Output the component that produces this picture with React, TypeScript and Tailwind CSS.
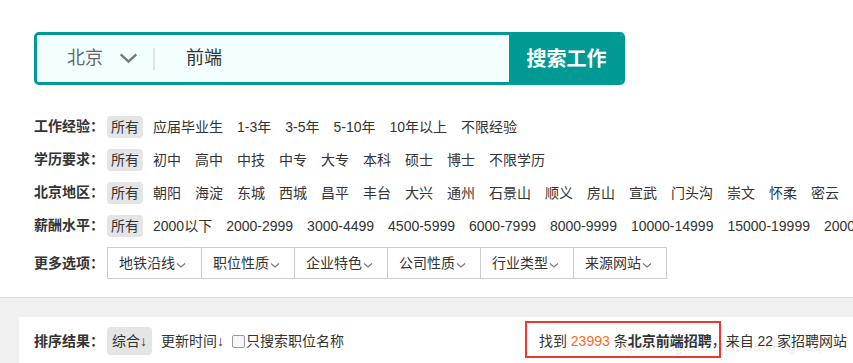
import React from 'react';

const FONT = { fontFamily: '"Liberation Sans", "Noto Sans CJK SC", sans-serif' };

interface FilterRow {
  label: string;
  items: string[];
}

const filterRows: FilterRow[] = [
  { label: '工作经验：', items: ['应届毕业生', '1-3年', '3-5年', '5-10年', '10年以上', '不限经验'] },
  { label: '学历要求：', items: ['初中', '高中', '中技', '中专', '大专', '本科', '硕士', '博士', '不限学历'] },
  {
    label: '北京地区：',
    items: ['朝阳', '海淀', '东城', '西城', '昌平', '丰台', '大兴', '通州', '石景山', '顺义', '房山', '宣武', '门头沟', '崇文', '怀柔', '密云', '延庆'],
  },
  {
    label: '薪酬水平：',
    items: ['2000以下', '2000-2999', '3000-4499', '4500-5999', '6000-7999', '8000-9999', '10000-14999', '15000-19999', '20000以上'],
  },
];

const moreOptions = ['地铁沿线', '职位性质', '企业特色', '公司性质', '行业类型', '来源网站'];

const SmallChevron: React.FC = () => (
  <svg viewBox="0 0 12 12" className="w-[12px] h-[12px] mt-[3px]" fill="none" stroke="#777" strokeWidth={1.1}>
    <path d="M2 4.5l4 3.5 4-3.5" />
  </svg>
);

const Chip: React.FC<{ children: React.ReactNode; active?: boolean }> = ({ children, active }) => (
  <span className={`px-[4px] h-[22px] leading-[22px] rounded-[4px] ${active ? 'bg-[#e5e5e5]' : ''}`}>{children}</span>
);

const Row: React.FC<{ row: FilterRow }> = ({ row }) => (
  <div className="flex items-center h-[33px] whitespace-nowrap text-[14px] text-[#333]">
    <span className="font-bold w-[73px] shrink-0">{row.label}</span>
    <div className="flex items-center gap-[6px]">
      <Chip active>所有</Chip>
      {row.items.map((item) => (
        <Chip key={item}>{item}</Chip>
      ))}
    </div>
  </div>
);

export default function App() {
  return (
    <div className="w-full h-[363px] overflow-hidden bg-white" style={FONT}>
      <div className="w-[1100px]">
        {/* search area */}
        <div className="pt-[32px] pl-[34px]">
          <div className="flex w-[591px] h-[53px] border-[3px] border-[#009a95] rounded-[5px] overflow-hidden">
            <div className="flex-1 flex items-center bg-[#f3fffe]">
              <span className="ml-[30px] text-[18px] text-[#666]">北京</span>
              <svg viewBox="0 0 20 12" className="ml-[16px] w-[19px] h-[11px]" fill="none" stroke="#777" strokeWidth={2.6}>
                <path d="M1.5 1.5l8.5 8 8.5-8" />
              </svg>
              <span className="ml-[15px] w-[2px] h-[22px] bg-[#e2e2e2]" />
              <span className="ml-[31px] text-[18px] text-[#333]">前端</span>
            </div>
            <button className="w-[113px] pl-[2px] bg-[#009a95] text-white text-[20px] font-bold">搜索工作</button>
          </div>
        </div>

        {/* filters */}
        <div className="pl-[34px] pt-[25px]">
          {filterRows.map((row) => (
            <Row key={row.label} row={row} />
          ))}
          <div className="flex items-center mt-[5px] whitespace-nowrap text-[14px] text-[#333]">
            <span className="font-bold w-[73px] shrink-0">更多选项：</span>
            <div className="flex border border-[#ccc] h-[32px]">
              {moreOptions.map((opt, i) => (
                <div
                  key={opt}
                  className={`flex items-center w-[93px] pl-[11px] ${i > 0 ? 'border-l border-[#ccc]' : ''}`}
                >
                  {opt}
                  <SmallChevron />
                </div>
              ))}
            </div>
          </div>
        </div>

        {/* results bar */}
        <div className="mt-[18px] border-t border-[#dcdcdc] bg-[#f0f0f0] pt-[19px] pl-[19px]">
          <div className="bg-white h-[60px] pl-[15px] pt-[10px]">
            <div className="flex items-center justify-between w-[813px] whitespace-nowrap text-[14px] text-[#333]">
              <div className="flex items-center">
                <span className="font-bold w-[73px]">排序结果：</span>
                <span className="h-[28px] leading-[28px] px-[5px] rounded-[4px] bg-[#e5e5e5]">综合↓</span>
                <span className="ml-[9px]">更新时间↓</span>
                <span className="ml-[8px] w-[13px] h-[13px] border border-[#999] rounded-[2px] bg-[#f7f7f7]" />
                <span className="ml-[1px]">只搜索职位名称</span>
              </div>
              <div className="relative">
                <span className="absolute left-[75px] top-[5px] text-[14px] text-[#000]/10">https://blog.csdn.net/wanfengwzq</span>
                <span className="relative">
                  <span className="absolute left-[-14px] right-[-9px] top-[-12px] bottom-[-9px] border-2 border-[#f03535]" />
                  找到 <span className="text-[#ff6a1a]">23993</span> 条<span className="font-bold">北京前端招聘</span>
                </span>
                <span>，来自 22 家招聘网站</span>
              </div>
            </div>
          </div>
        </div>
      </div>
    </div>
  );
}
